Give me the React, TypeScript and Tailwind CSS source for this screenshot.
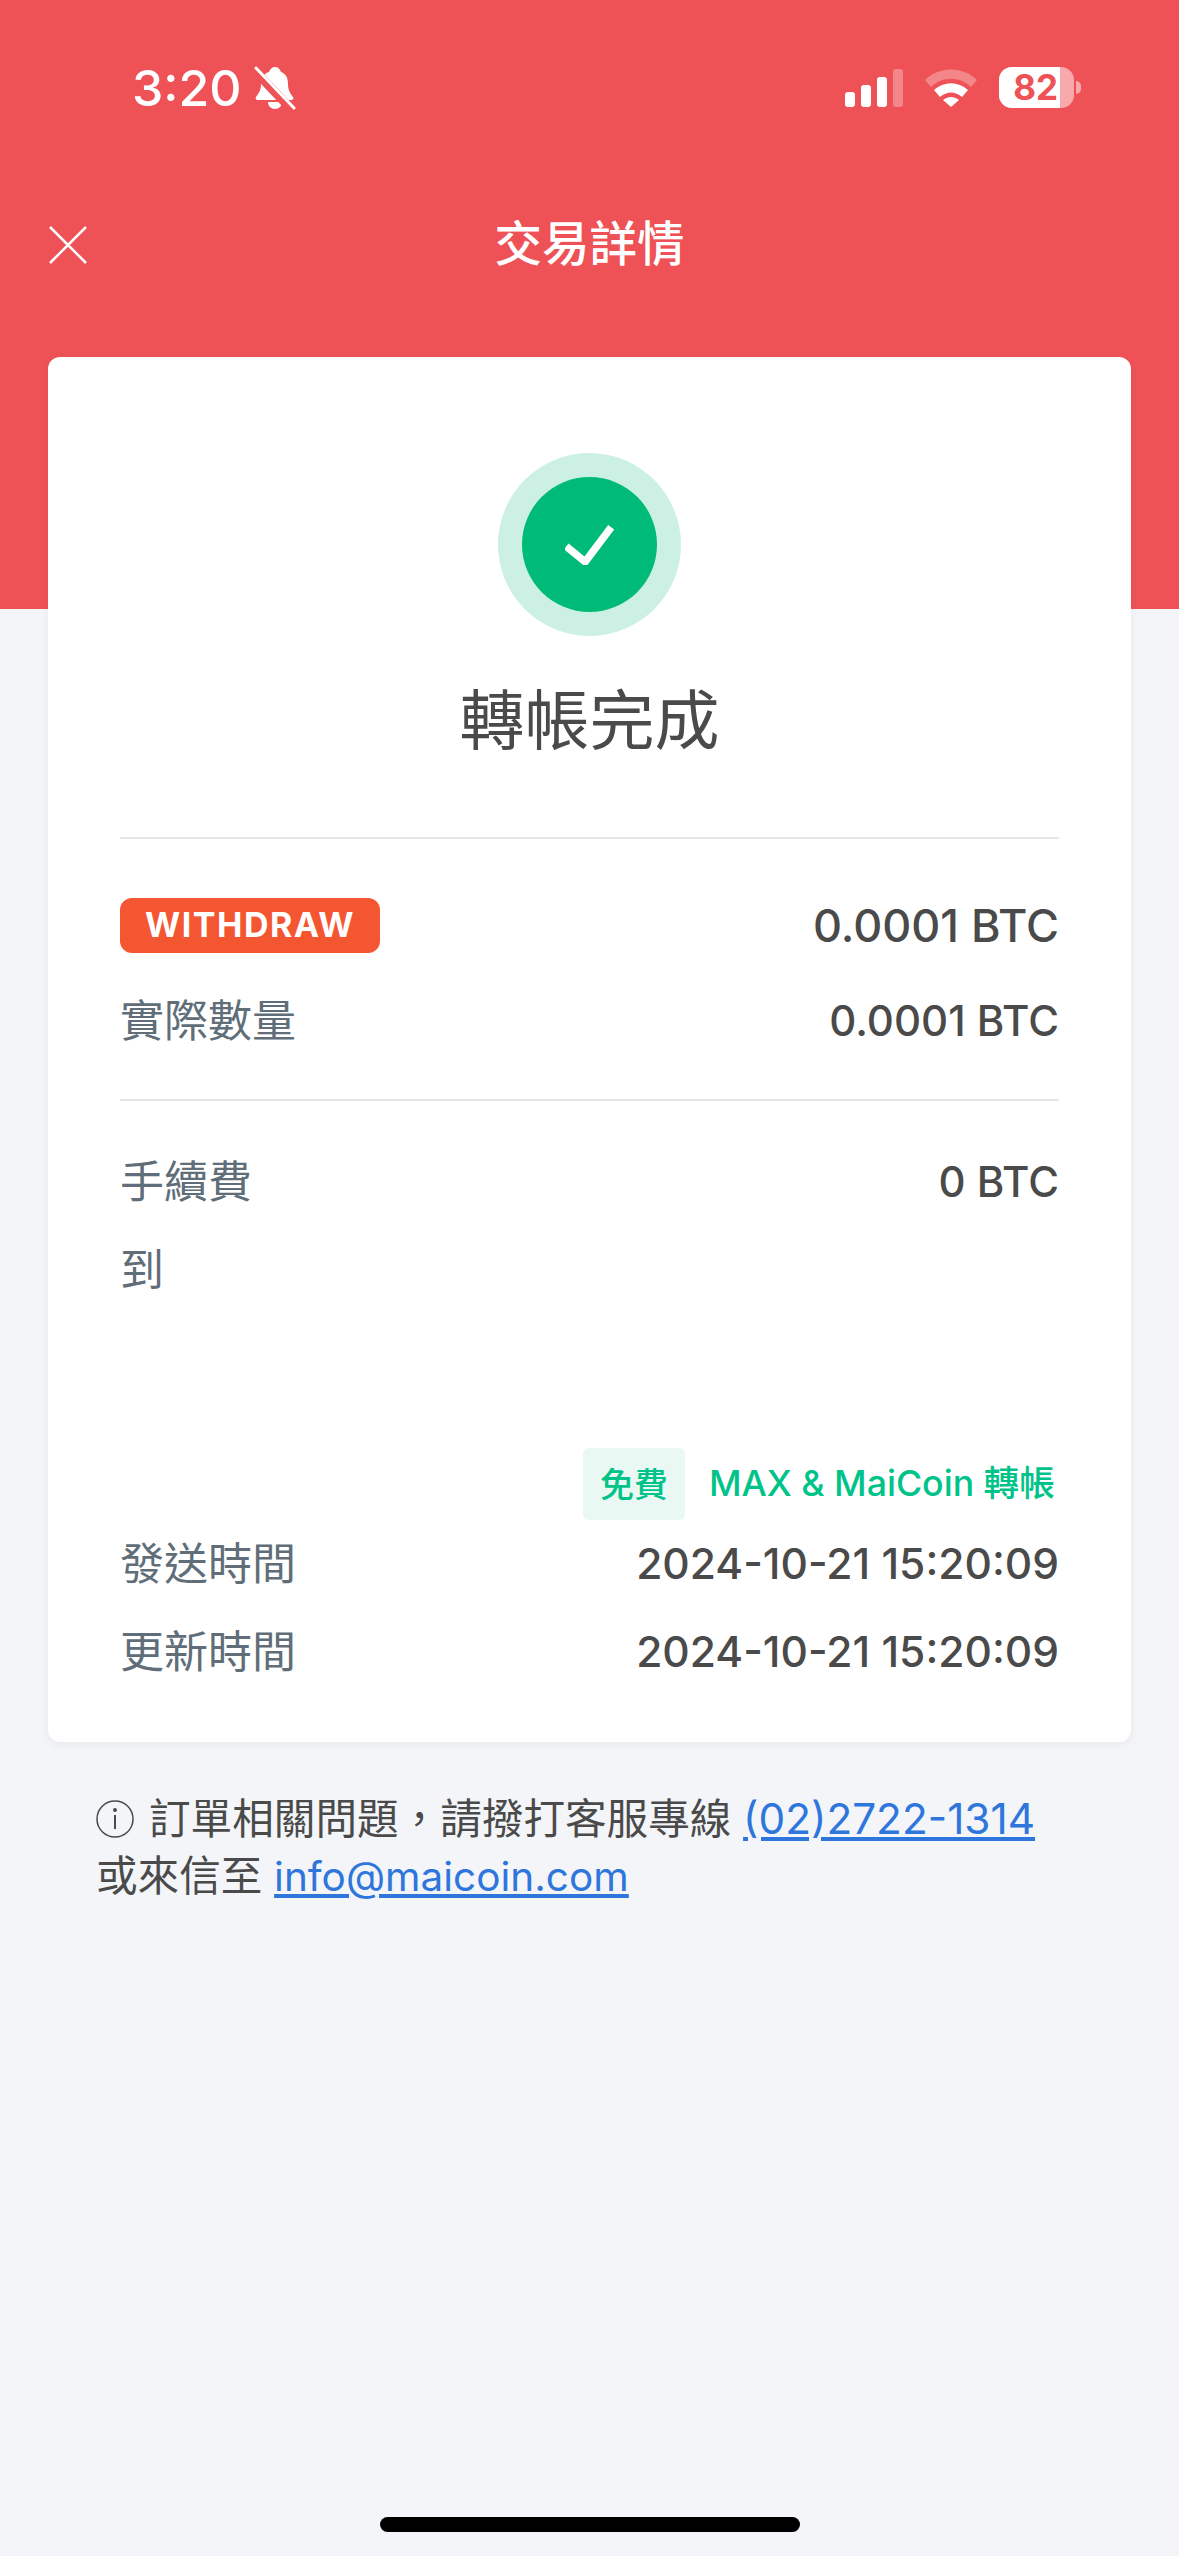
const cjk = "font-['Inter','Noto_Sans_CJK_TC',sans-serif]";

function Row({ label, value, valueClass = "text-[42px]" }: { label: string; value: string; valueClass?: string }) {
  return (
    <div className="flex h-[88px] items-center justify-between">
      <span className="text-[44px] leading-none text-[#5f6e78]">{label}</span>
      <span className={`${valueClass} font-medium leading-none text-[#4a4a4a]`}>{value}</span>
    </div>
  );
}

function StatusBar() {
  return (
    <div className="flex h-[175px] items-start justify-between pl-[132px] pr-[98px] pt-[62px]">
      <div className="flex items-center gap-[12px]">
        <span className="text-[50px] font-medium leading-[52px] text-white">3:20</span>
        {/* muted bell */}
        <svg width="42" height="44" viewBox="0 0 42 44">
          <path d="M21 1c3 0 5 2 6 5 5 2 7 6 7 12 0 6 2 9 5 13 1 2 0 3-2 3H4c-2 0-3-1-2-3 3-4 5-7 5-13 0-6 2-10 8-12 1-3 3-5 6-5z" fill="#fff" />
          <path d="M14 36h14c0 4-3 7-7 7s-7-3-7-7z" fill="#fff" />
          <path d="M1 5l36 38" stroke="#ee5256" strokeWidth="9" />
          <path d="M2 2l38 40" stroke="#fff" strokeWidth="3" strokeLinecap="round" />
        </svg>
      </div>
      <div className="mt-[5px] flex items-center">
        <div className="flex h-[38px] items-end gap-[6px]">
          <div className="h-[15px] w-[10px] rounded-[3px] bg-white" />
          <div className="h-[22px] w-[10px] rounded-[3px] bg-white" />
          <div className="h-[30px] w-[10px] rounded-[3px] bg-white" />
          <div className="h-[38px] w-[10px] rounded-[3px] bg-white/30" />
        </div>
        <svg className="ml-[22px]" width="52" height="38" viewBox="0 0 52 38">
          <path d="M0 11C14-3 38-3 52 11l-6 7C35 7 17 7 6 18z" fill="#fff" fillOpacity=".3" />
          <path d="M9 21c10-9 24-9 34 0l-6 7c-7-6-15-6-22 0z" fill="#fff" />
          <path d="M18 31c5-4 11-4 16 0l-8 7z" fill="#fff" />
        </svg>
        <div className="relative ml-[22px] flex h-[41px] w-[75px] items-center overflow-hidden rounded-[13px] bg-white/50">
          <div className="flex h-full w-[61px] items-center justify-end bg-white pr-[2px]">
            <span className="font-['Inter',sans-serif] text-[35px] font-bold leading-none text-[#ee5256]">82</span>
          </div>
        </div>
        <div className="ml-[2px] h-[13px] w-[5px] rounded-r-full bg-white/50" />
      </div>
    </div>
  );
}

export default function App() {
  return (
    <div className={`${cjk} flex min-h-[2556px] w-full flex-col bg-[#f3f5f9]`}>
      <div className="h-[609px] shrink-0 bg-[#ee5256]">
        <StatusBar />
        <div className="relative flex h-[138px] items-center justify-center">
          <svg className="absolute left-[48px] top-[50px]" width="40" height="40" viewBox="0 0 40 40">
            <path d="M2 2l36 36M38 2L2 38" stroke="#fff" strokeWidth="2.5" />
          </svg>
          <span className="text-[47.5px] font-medium leading-none text-white">交易詳情</span>
        </div>
      </div>

      <div className="mx-[48px] -mt-[252px] rounded-[12px] bg-white px-[72px] pb-[46px] pt-[96px] shadow-[0_2px_10px_rgba(0,0,0,0.06)]">
        <div className="flex flex-col items-center border-b-2 border-[#e4e6e8] pb-[80px]">
          <div className="flex h-[183px] w-[183px] items-center justify-center rounded-full bg-[#ccf0e3]">
            <div className="flex h-[135px] w-[135px] items-center justify-center rounded-full bg-[#00bb77]">
              <svg width="50" height="40" viewBox="0 0 50 40">
                <path d="M1.2 21.5l19 15.3L46.2 2.2" stroke="#fff" strokeWidth="7.5" fill="none" />
              </svg>
            </div>
          </div>
          <div className="mt-[49px] text-[65px] leading-[72px] text-[#4a4a4a]">轉帳完成</div>
        </div>

        <div className="flex flex-col gap-[8px] border-b-2 border-[#e4e6e8] pb-[34px] pt-[42px]">
          <div className="flex h-[88px] items-center justify-between">
            <span className="flex h-[55px] w-[260px] items-center justify-center rounded-[12px] bg-[#f55632] text-[34px] font-bold leading-none tracking-[1.5px] text-white">
              WITHDRAW
            </span>
            <span className="text-[45px] font-medium leading-none text-[#4a4a4a]">0.0001 BTC</span>
          </div>
          <Row label="實際數量" value="0.0001 BTC" />
        </div>

        <div className="pt-[37px]">
          <Row label="手續費" value="0 BTC" />
          <div className="h-[88px] text-[44px] leading-[88px] text-[#5f6e78]">到</div>
          <div className="mt-[134px] flex h-[72px] items-center justify-end">
            <span className="flex h-full w-[102px] items-center justify-center rounded-[6px] bg-[#e9f8f2] text-[34px] font-medium text-[#00c389]">
              免費
            </span>
            <span className="ml-[24px] mr-[4px] text-[35.7px] font-medium text-[#00c389]">MAX &amp; MaiCoin 轉帳</span>
          </div>
          <Row label="發送時間" value="2024-10-21 15:20:09" valueClass="text-[42.5px]" />
          <Row label="更新時間" value="2024-10-21 15:20:09" valueClass="text-[42.5px]" />
        </div>
      </div>

      <div className="ml-[96px] mt-[48px] text-[41.6px] leading-[57px] text-[#4a4a4a]">
        <div className="flex items-center">
          <svg className="mr-[15px] shrink-0" width="38" height="38" viewBox="0 0 38 38">
            <circle cx="19" cy="19" r="18" fill="none" stroke="#4a4a4a" strokeWidth="1.5" />
            <circle cx="19" cy="10" r="2" fill="#4a4a4a" />
            <path d="M19 15v14" stroke="#4a4a4a" strokeWidth="2" />
          </svg>
          <span className="whitespace-nowrap">
            訂單相關問題{"\uFF0C"}請撥打客服專線 <a className="text-[42.3px] text-[#2f76dc] underline">(02)2722-1314</a>
          </span>
        </div>
        <div className="whitespace-nowrap">
          或來信至 <a className="text-[40.5px] text-[#2f76dc] underline">info@maicoin.com</a>
        </div>
      </div>

      <div className="mx-auto mb-[24px] mt-auto h-[15px] w-[420px] rounded-full bg-black" />
    </div>
  );
}
